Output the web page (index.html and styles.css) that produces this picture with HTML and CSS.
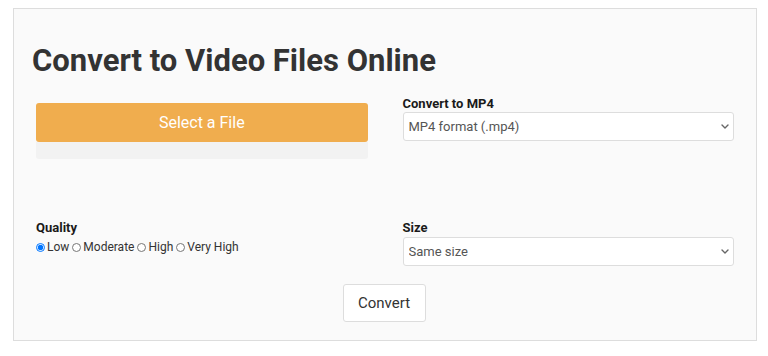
FILE: index.html
```html
<!DOCTYPE html>
<html>
<head>
<meta charset="utf-8">
<link rel="stylesheet" href="styles.css">
</head>
<body>
<div class="panel">
  <h1 class="title">Convert to Video Files Online</h1>
  <div class="grid row-one">
    <div class="col">
      <div class="upload">
        <button class="btn-file">Select a File</button>
        <div class="upload-strip"></div>
      </div>
    </div>
    <div class="col">
      <label class="field-label">Convert to MP4</label>
      <div class="select-wrap">
        <select class="field-select"><option>MP4 format (.mp4)</option></select>
        <svg class="chevron" width="8" height="5" viewBox="0 0 8 5"><path d="M1 1 L4 4 L7 1" fill="none" stroke="#666" stroke-width="1.4" stroke-linecap="round" stroke-linejoin="round"/></svg>
      </div>
    </div>
  </div>
  <div class="grid row-two">
    <div class="col">
      <label class="field-label">Quality</label>
      <div class="radios">
        <label class="radio"><input type="radio" name="q" checked>Low</label>
        <label class="radio"><input type="radio" name="q">Moderate</label>
        <label class="radio"><input type="radio" name="q">High</label>
        <label class="radio"><input type="radio" name="q">Very High</label>
      </div>
    </div>
    <div class="col">
      <label class="field-label">Size</label>
      <div class="select-wrap size-wrap">
        <select class="field-select"><option>Same size</option></select>
        <svg class="chevron" width="8" height="5" viewBox="0 0 8 5"><path d="M1 1 L4 4 L7 1" fill="none" stroke="#666" stroke-width="1.4" stroke-linecap="round" stroke-linejoin="round"/></svg>
      </div>
    </div>
  </div>
  <div class="actions">
    <button class="btn-convert">Convert</button>
  </div>
</div>
</body>
</html>
```
FILE: styles.css
```css
html, body {
  margin: 0;
  padding: 0;
  background: #ffffff;
  font-family: Roboto, "Liberation Sans", sans-serif;
}
.panel {
  margin: 8px 0 0 13px;
  width: 744px;
  border: 1px solid #dddddd;
  background: #fafafa;
  padding: 0 22px 18px 22px;
  box-sizing: border-box;
}
.title {
  margin: 34px 0 0 -4px;
  font-size: 31px;
  line-height: 36px;
  font-weight: 700;
  color: #333333;
}
.grid {
  display: grid;
  grid-template-columns: 1fr 1fr;
  column-gap: 35px;
}
.row-one {
  margin-top: 17px;
  height: 124px;
}
.col {
  display: flex;
  flex-direction: column;
}
.upload {
  margin-top: 7px;
  display: flex;
  flex-direction: column;
}
.btn-file {
  height: 39px;
  border: none;
  border-radius: 3px;
  background: #f0ad4e;
  color: #ffffff;
  font-family: Roboto, "Liberation Sans", sans-serif;
  font-size: 16px;
  padding: 0;
}
.upload-strip {
  height: 17px;
  background: #f2f2f2;
  border-radius: 0 0 3px 3px;
}
.field-label {
  font-size: 13px;
  line-height: 16px;
  font-weight: 700;
  color: #1a1a1a;
}
.select-wrap {
  position: relative;
  display: flex;
}
.size-wrap {
  margin-top: 1px;
}
.field-select {
  flex: 1;
  height: 29px;
  border: 1px solid #dddddd;
  border-radius: 3px;
  background: #ffffff;
  color: #555555;
  font-family: Roboto, "Liberation Sans", sans-serif;
  font-size: 13px;
  padding: 0 20px 0 5px;
  appearance: none;
  -webkit-appearance: none;
}
.chevron {
  position: absolute;
  right: 5px;
  top: 12px;
}
.radios {
  display: flex;
  align-items: center;
  margin-top: 4px;
  font-size: 12px;
  line-height: 14px;
  color: #333333;
}
.radio {
  display: flex;
  align-items: center;
  margin-right: 3px;
}
.radio input {
  width: 9px;
  height: 9px;
  margin: 0 2px 0 0;
}
.actions {
  display: flex;
  justify-content: center;
  margin-top: 18px;
}
.btn-convert {
  width: 83px;
  height: 38px;
  margin-left: -2px;
  border: 1px solid #dddddd;
  border-radius: 3px;
  background: #ffffff;
  color: #333333;
  font-family: Roboto, "Liberation Sans", sans-serif;
  font-size: 15px;
  padding: 0;
}
```
